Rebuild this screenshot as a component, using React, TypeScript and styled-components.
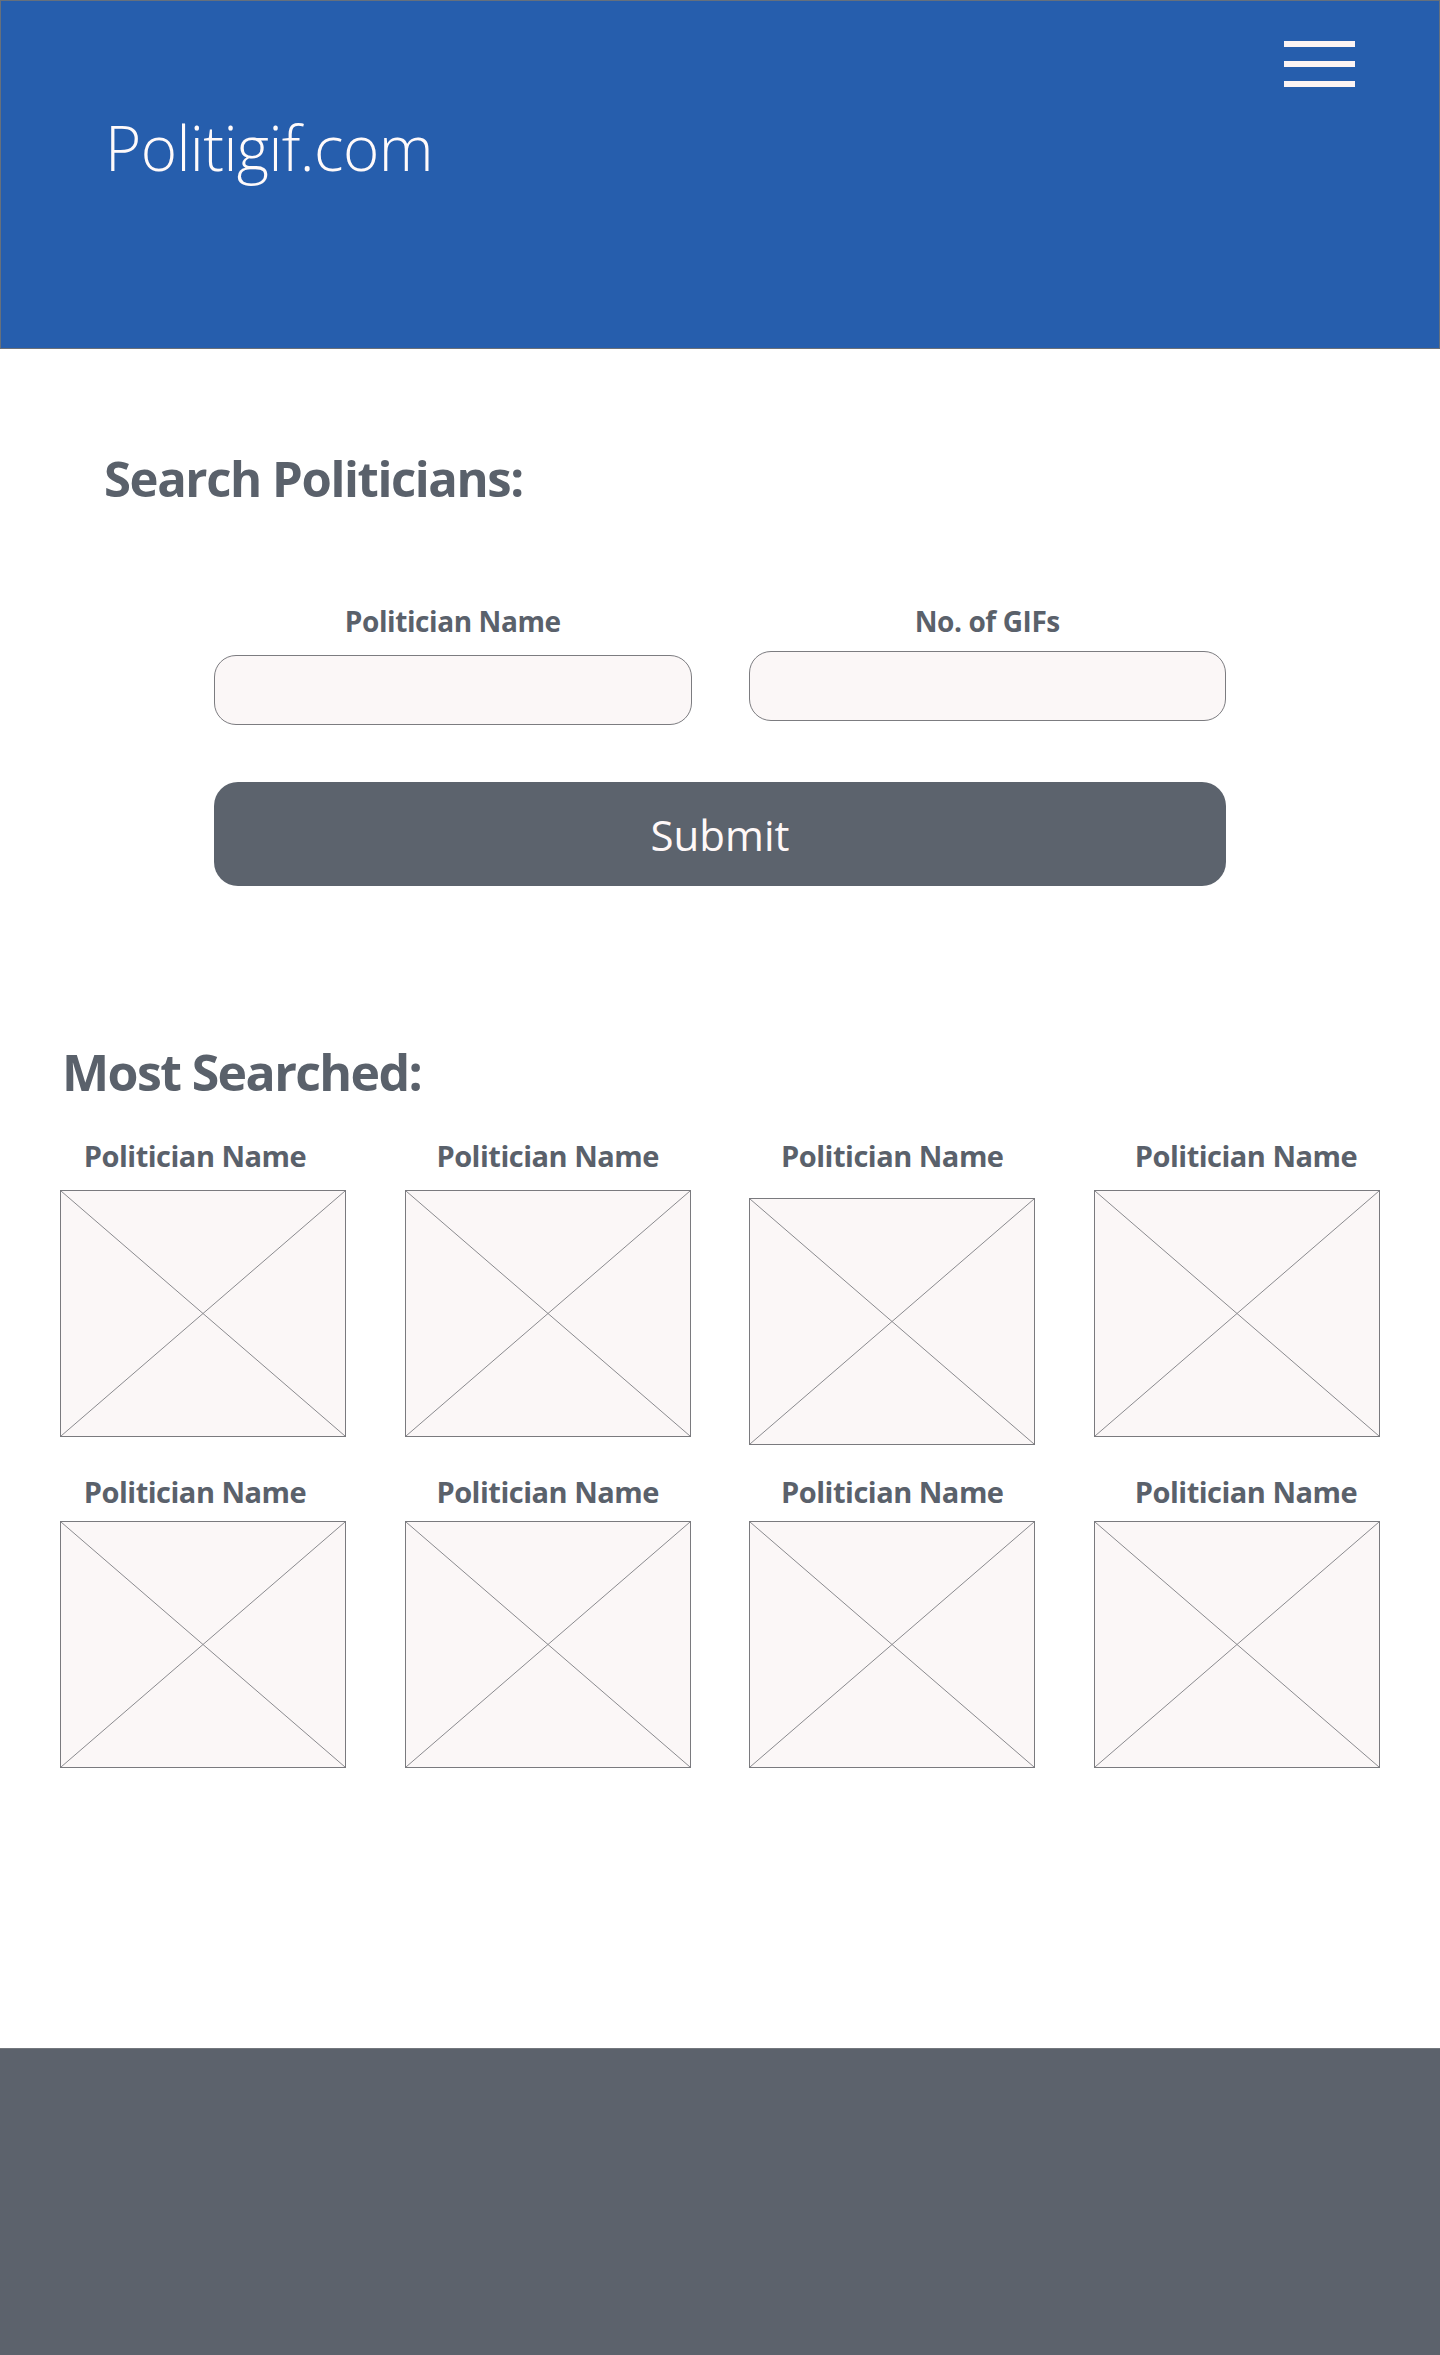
import React from "react";
import { createGlobalStyle, styled } from "styled-components";

const GlobalStyle = createGlobalStyle`
  html, body {
    margin: 0;
    padding: 0;
    background: #ffffff;
  }
  body {
    font-family: "Open Sans", "Noto Sans", sans-serif;
  }
  * {
    box-sizing: border-box;
  }
`;

// dx nudges the caption off the card's centre, as in the mockup
const cards = [
  { name: "Politician Name", shift: 0, gap: 20, dx: -8 },
  { name: "Politician Name", shift: 0, gap: 20, dx: 0 },
  { name: "Politician Name", shift: 8, gap: 20, dx: 0 },
  { name: "Politician Name", shift: 0, gap: 20, dx: 9 },
  { name: "Politician Name", shift: 0, gap: 15, dx: -8 },
  { name: "Politician Name", shift: 0, gap: 15, dx: 0 },
  { name: "Politician Name", shift: 0, gap: 15, dx: 0 },
  { name: "Politician Name", shift: 0, gap: 15, dx: 9 },
];

// Header
const Header = styled.header`
  height: 349px;
  background: #265ead;
  border: 1px solid #66707c;
  border-bottom-color: #6b7078;
  padding: 40px 84px 0 104px;
  display: flex;
  justify-content: space-between;
  align-items: flex-start;
`;

const Logo = styled.div`
  margin-top: 75px;
  font-size: 62px;
  line-height: 1;
  font-weight: 300;
  color: #fffafa;
  letter-spacing: -0.6px;
`;

const Burger = styled.button`
  display: flex;
  flex-direction: column;
  gap: 14px;
  padding: 0;
  border: none;
  background: none;
  cursor: pointer;
`;

const BurgerBar = styled.span`
  display: block;
  width: 71px;
  height: 6px;
  background: #fbf4f4;
`;

// Search section
const Main = styled.main`
  padding: 103px 60px 280px;
`;

const Title = styled.h2<{ $indent: number; $size: number; $top: number }>`
  margin: ${(p) => p.$top}px 0 0 ${(p) => p.$indent}px;
  font-size: ${(p) => p.$size}px;
  line-height: 1;
  font-weight: 700;
  letter-spacing: ${(p) => (p.$size < 50 ? -1.4 : -1.6)}px;
  color: #5a616b;
`;

const Form = styled.form`
  width: 1012px;
  margin: 104px 0 0 154px;
  display: flex;
  flex-direction: column;
  gap: 57px;
`;

const Fields = styled.div`
  display: grid;
  grid-template-columns: 1fr 1fr;
  column-gap: 57px;
`;

const Field = styled.label<{ $lift: number }>`
  display: flex;
  flex-direction: column;
  align-items: center;
  gap: ${(p) => 20 - p.$lift}px;
`;

const FieldLabel = styled.span`
  font-size: 28px;
  line-height: 1;
  font-weight: 700;
  letter-spacing: -0.4px;
  color: #5a616b;
`;

const Input = styled.input`
  width: 100%;
  height: 70px;
  border: 1px solid #7c7c80;
  border-radius: 22px;
  background: #fbf7f7;
  font-family: inherit;
  font-size: 24px;
  padding: 0 20px;
  outline: none;
`;

const Submit = styled.button`
  height: 104px;
  border: none;
  border-radius: 24px;
  background: #5c636d;
  color: #fff8f8;
  font-family: inherit;
  font-size: 42px;
  font-weight: 400;
  cursor: pointer;
`;

// Most searched
const Results = styled.section``;

const Grid = styled.div`
  margin-top: 44px;
  display: grid;
  grid-template-columns: repeat(4, 286px);
  column-gap: 58.67px;
  row-gap: 32px;
`;

const Card = styled.div<{ $gap: number; $shift: number }>`
  display: flex;
  flex-direction: column;
  align-items: center;
  gap: ${(p) => p.$gap + p.$shift}px;
`;

const CardLabel = styled.span<{ $dx: number }>`
  margin-left: ${(p) => (p.$dx > 0 ? p.$dx * 2 : 0)}px;
  margin-right: ${(p) => (p.$dx < 0 ? -p.$dx * 2 : 0)}px;
  font-size: 29px;
  line-height: 1;
  font-weight: 700;
  letter-spacing: -0.5px;
  color: #5a616b;
`;

const Placeholder = styled.div`
  width: 286px;
  height: 247px;
  border: 1px solid #7a7a7e;
  background: #fbf7f7;

  svg {
    display: block;
    width: 100%;
    height: 100%;
  }
`;

const Footer = styled.footer`
  height: 308px;
  background: #5c626c;
  border-top: 1px solid #73777d;
`;

const App: React.FC = () => {
  return (
    <>
      <GlobalStyle />
      <Header>
        <Logo>Politigif.com</Logo>
        <Burger type="button" aria-label="Menu">
          <BurgerBar />
          <BurgerBar />
          <BurgerBar />
        </Burger>
      </Header>

      <Main>
        <Title $indent={44} $size={49} $top={2}>Search Politicians:</Title>
        <Form onSubmit={(e) => e.preventDefault()}>
          <Fields>
            <Field $lift={0}>
              <FieldLabel>Politician Name</FieldLabel>
              <Input type="text" />
            </Field>
            <Field $lift={4}>
              <FieldLabel>No. of GIFs</FieldLabel>
              <Input type="number" />
            </Field>
          </Fields>
          <Submit type="submit">Submit</Submit>
        </Form>

        <Results>
          <Title $indent={2} $size={50} $top={161}>Most Searched:</Title>
          <Grid>
            {cards.map((card, index) => (
              <Card key={index} $gap={card.gap} $shift={card.shift}>
                <CardLabel $dx={card.dx}>{card.name}</CardLabel>
                <Placeholder>
                  <svg viewBox="0 0 100 100" preserveAspectRatio="none">
                    <line x1="0" y1="0" x2="100" y2="100" stroke="#8a8a8e" strokeWidth="1" vectorEffect="non-scaling-stroke" />
                    <line x1="100" y1="0" x2="0" y2="100" stroke="#8a8a8e" strokeWidth="1" vectorEffect="non-scaling-stroke" />
                  </svg>
                </Placeholder>
              </Card>
            ))}
          </Grid>
        </Results>
      </Main>

      <Footer />
    </>
  );
};

export default App;
